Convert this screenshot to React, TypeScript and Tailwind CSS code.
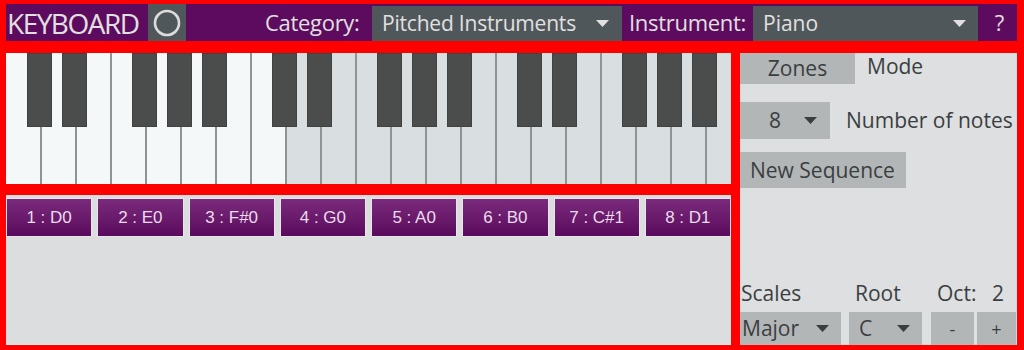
import React from "react";

const Tri = ({ color }: { color: string }) => (
  <svg width="13" height="7" viewBox="0 0 13 7" className="shrink-0">
    <polygon points="0,0 13,0 6.5,7" fill={color} />
  </svg>
);

const WHITE_COUNT = 21;
const LIGHT_COUNT = 8;
const BLACK_AFTER = [0, 1, 3, 4, 5, 7, 8, 10, 11, 12, 14, 15, 17, 18, 19];
const NOTES = ["1 : D0", "2 : E0", "3 : F#0", "4 : G0", "5 : A0", "6 : B0", "7 : C#1", "8 : D1"];

function Keyboard() {
  return (
    <div className="relative h-[131px] w-[725px] overflow-hidden flex">
      {Array.from({ length: WHITE_COUNT }).map((_, i) => (
        <div
          key={i}
          className={
            (i === 0 ? "w-[34px] " : "w-[35px] border-l-2 border-[#8e9393] ") +
            "shrink-0 h-full " +
            (i < LIGHT_COUNT ? "bg-[#f5f8f9]" : "bg-[#d9dfe1]")
          }
        />
      ))}
      {BLACK_AFTER.map((i) => (
        <div
          key={"b" + i}
          className="absolute top-0 h-[74px] w-[25px] bg-[#4a4d4c] border border-[#3f4241]"
          style={{ left: 21 + 35 * i }}
        />
      ))}
    </div>
  );
}

export default function App() {
  return (
    <div className="w-[1024px] h-[350px] bg-[#ff0000] flex flex-col pt-[4px] pl-[6px] pr-[7px] pb-[5px] overflow-hidden font-['Open_Sans',sans-serif]">
      {/* Header */}
      <div className="h-[37px] shrink-0 bg-[#5d0b5f] flex items-stretch text-[#e0e0e0]">
        <div className="w-[142px] flex items-center pl-[1px] text-[28px] font-medium tracking-[-1.5px] leading-none">KEYBOARD</div>
        <div className="w-[38px] bg-[#50575b] flex items-center justify-center">
          <svg width="28" height="28" viewBox="0 0 28 28">
            <circle cx="14" cy="14" r="12" fill="none" stroke="#dcdcdc" strokeWidth="2.6" />
          </svg>
        </div>
        <div className="ml-[79px] w-[107px] flex items-center text-[22px] tracking-[-0.3px]">Category:</div>
        <div className="w-[250px] mt-[2px] bg-[#50575b] flex items-center pl-[10px] pr-[13px] text-[21px] tracking-[-0.2px]">
          <span className="flex-1 whitespace-nowrap">Pitched Instruments</span>
          <Tri color="#e0e0e0" />
        </div>
        <div className="w-[131px] pl-[7px] flex items-center text-[22px] tracking-[-0.3px]">Instrument:</div>
        <div className="w-[225px] mt-[2px] bg-[#50575b] flex items-center pl-[10px] pr-[12px] text-[21px]">
          <span className="flex-1">Piano</span>
          <Tri color="#e0e0e0" />
        </div>
        <div className="flex-1 flex items-center justify-center pl-[4px] text-[22px]">?</div>
      </div>

      {/* Main */}
      <div className="mt-[12px] flex-1 flex gap-[9px] min-h-0">
        {/* Left column */}
        <div className="w-[725px] flex flex-col">
          <Keyboard />
          <div className="mt-[11px] flex-1 bg-[#dcdddf] pt-[3px] border-b border-[#e8e9ea]">
            <div className="flex gap-[5px]">
              {NOTES.map((n) => (
                <div
                  key={n}
                  className="flex-1 h-[39px] border border-[#e6e6e8] bg-linear-to-b from-[#7a2a7c] to-[#5a095c] flex items-center justify-center text-[17px] text-[#eadcec] font-['Liberation_Sans',Arial,sans-serif]"
                >
                  {n}
                </div>
              ))}
            </div>
          </div>
        </div>

        {/* Right panel */}
        <div className="w-[277px] bg-[#dddfe0] flex flex-col text-[#3a3e41] text-[21px] leading-none">
          <div className="flex items-stretch h-[31px]">
            <div className="w-[115px] bg-[#b3b6b6] flex items-center justify-center">Zones</div>
            <div className="ml-[12px] flex items-center pb-[4px]">Mode</div>
          </div>
          <div className="mt-[18px] flex items-stretch h-[37px]">
            <div className="w-[90px] bg-[#b3b6b6] flex items-center pl-[29px] pr-[13px]">
              <span className="flex-1">8</span>
              <Tri color="#3a3e41" />
            </div>
            <div className="ml-[16px] flex items-center whitespace-nowrap">Number of notes</div>
          </div>
          <div className="mt-[13px] h-[36px] w-[166px] bg-[#b3b6b6] flex items-center pl-[10px] whitespace-nowrap">
            New Sequence
          </div>

          <div className="mt-auto flex items-end h-[22px]">
            <div className="w-[115px] pl-[1px]">Scales</div>
            <div className="w-[82px]">Root</div>
            <div className="w-[55px]">Oct:</div>
            <div>2</div>
          </div>
          <div className="mt-[8px] flex h-[33px] items-stretch">
            <div className="w-[101px] bg-[#b3b6b6] flex items-center pl-[2px] pr-[12px]">
              <span className="flex-1">Major</span>
              <Tri color="#3a3e41" />
            </div>
            <div className="ml-[8px] w-[73px] bg-[#b3b6b6] flex items-center pl-[10px] pr-[12px]">
              <span className="flex-1">C</span>
              <Tri color="#3a3e41" />
            </div>
            <div className="ml-[9px] w-[43px] bg-[#b3b6b6] flex items-center justify-center text-[18px]">-</div>
            <div className="ml-[3px] w-[39px] bg-[#b3b6b6] flex items-center justify-center text-[18px]">+</div>
          </div>
        </div>
      </div>
    </div>
  );
}
